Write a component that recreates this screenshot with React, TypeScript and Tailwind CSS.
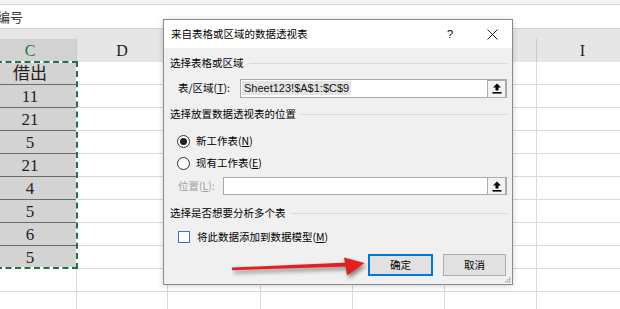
import React from 'react';

const cjk = { fontFamily: '"Noto Sans CJK SC", "Liberation Sans", sans-serif' };
const serif = { fontFamily: '"Liberation Serif", "Noto Sans CJK SC", serif' };

const columns = [
  { label: 'C', width: 'w-[93px]' },
  { label: 'D', width: 'w-[91px]' },
  { label: 'E', width: 'w-[93px]' },
  { label: 'F', width: 'w-[92px]' },
  { label: 'G', width: 'w-[92px]' },
  { label: 'H', width: 'w-[92px]' },
  { label: 'I', width: 'w-[92px]' },
];

const values = ['借出', '11', '21', '5', '21', '4', '5', '6', '5', '', ''];

function UploadButton() {
  return (
    <div className="flex h-[18px] w-[19px] items-center justify-center border border-[#adadad] bg-[#f3f3f3]">
      <svg width="10" height="11" viewBox="0 0 10 11">
        <path d="M5 0.5 L9 4.5 L6.5 4.5 L6.5 7.5 L3.5 7.5 L3.5 4.5 L1 4.5 Z" fill="#000" />
        <rect x="0.5" y="9" width="9" height="1.6" fill="#000" />
      </svg>
    </div>
  );
}

function SectionLabel({ text }: { text: string }) {
  return (
    <div className="flex h-[18px] items-center gap-[5px] leading-none">
      <span>{text}</span>
      <div className="h-px flex-1 bg-[#d9d9d9]" />
    </div>
  );
}

function Radio({ checked, label, hotkey }: { checked?: boolean; label: string; hotkey: string }) {
  return (
    <div className="flex h-[18px] items-center pl-[7px] leading-none">
      <div className="flex h-[13px] w-[13px] items-center justify-center rounded-full border border-[#333] bg-white">
        {checked && <div className="h-[7px] w-[7px] rounded-full bg-[#222]" />}
      </div>
      <span className="ml-[6px]">
        {label}(<span className="underline">{hotkey}</span>)
      </span>
    </div>
  );
}

function PivotDialog() {
  return (
    <div
      className="absolute left-[163px] top-[19px] flex h-[266px] w-[350px] flex-col border border-[#8a8a8a] bg-[#f0f0f0] text-[10.5px] text-black shadow-[0_1px_6px_rgba(0,0,0,0.18)]"
      style={cjk}
    >
      <div className="flex h-[28px] items-center bg-white pl-[7px] leading-none">
        <span className="flex-1">来自表格或区域的数据透视表</span>
        <span className="mr-[34px] text-[11px]" style={{ fontFamily: '"Liberation Sans", sans-serif' }}>
          ?
        </span>
        <svg width="11" height="11" viewBox="0 0 11 11" className="mr-[14px]">
          <path d="M0.5 0.5 L10.5 10.5 M10.5 0.5 L0.5 10.5" stroke="#222" strokeWidth="1" />
        </svg>
      </div>

      <div className="flex flex-1 flex-col pl-[6px] pr-[4px] pt-[6px]">
        <SectionLabel text="选择表格或区域" />

        <div className="mt-[7px] flex h-[19px] items-center pl-[8px] pr-[1px] leading-none">
          <span className="w-[62px]">
            表/区域(<span className="underline">T</span>):
          </span>
          <div className="flex h-[19px] flex-1 items-center border border-[#a8a8a8] bg-white pl-[1px]">
            <span
              className="flex-1 leading-[15px]"
              style={{ fontFamily: '"Liberation Sans", sans-serif', fontSize: '11px' }}
            >
              <span className="bg-[#e4e4e4] px-[2px] py-[1px] text-[#111]">Sheet123!$A$1:$C$9</span>
            </span>
            <UploadButton />
          </div>
        </div>

        <div className="mt-[7px]">
          <SectionLabel text="选择放置数据透视表的位置" />
        </div>

        <div className="mt-[9px]">
          <Radio checked label="新工作表" hotkey="N" />
        </div>
        <div className="mt-[4px]">
          <Radio label="现有工作表" hotkey="E" />
        </div>

        <div className="mt-[5px] flex h-[18px] items-center pl-[8px] pr-[1px] leading-none">
          <span className="w-[45px] text-[#a0a0a0]">
            位置(<span className="underline">L</span>):
          </span>
          <div className="flex h-[18px] flex-1 items-center justify-end border border-[#a8a8a8] bg-white">
            <UploadButton />
          </div>
        </div>

        <div className="mt-[9px]">
          <SectionLabel text="选择是否想要分析多个表" />
        </div>

        <div className="mt-[6px] flex h-[18px] items-center pl-[8px] leading-none">
          <div className="h-[12px] w-[12px] border border-[#3a74c4] bg-white" />
          <span className="ml-[7px]">
            将此数据添加到数据模型(<span className="underline">M</span>)
          </span>
        </div>

        <div className="mt-[8px] flex justify-end gap-[10px] pr-[2px] leading-none">
          <div className="flex h-[22px] w-[65px] items-center justify-center border-2 border-[#0078d7] bg-[#e1e1e1]">
            确定
          </div>
          <div className="flex h-[22px] w-[63px] items-center justify-center border border-[#adadad] bg-[#e1e1e1]">
            取消
          </div>
        </div>
      </div>

      <svg width="6" height="6" viewBox="0 0 6 6" className="absolute bottom-[1px] right-[1px]">
        <rect x="4" y="0" width="1.5" height="1.5" fill="#b0b0b0" />
        <rect x="2" y="2" width="1.5" height="1.5" fill="#b0b0b0" />
        <rect x="4" y="2" width="1.5" height="1.5" fill="#b0b0b0" />
        <rect x="0" y="4" width="1.5" height="1.5" fill="#b0b0b0" />
        <rect x="2" y="4" width="1.5" height="1.5" fill="#b0b0b0" />
        <rect x="4" y="4" width="1.5" height="1.5" fill="#b0b0b0" />
      </svg>
    </div>
  );
}

function RedArrow() {
  return (
    <svg
      width="620"
      height="309"
      viewBox="0 0 620 309"
      className="pointer-events-none absolute left-0 top-0 drop-shadow-[2px_3px_2px_rgba(0,0,0,0.45)]"
    >
      <path d="M232 267.6 L232 270.2 L348 266.6 L348 262.4 Z" fill="#e3201f" />
      <path d="M344 257.5 L364.5 263 L347 275.5 Z" fill="#e3201f" />
    </svg>
  );
}

export default function App() {
  return (
    <div className="relative h-[309px] w-[620px] overflow-hidden bg-white" style={cjk}>
      <div className="h-[5px] border-b border-[#d6d6d6] bg-[#f3f3f3]" />
      <div className="flex h-[24px] items-center border-b border-[#d4d4d4] bg-white">
        <span className="-ml-[3px] text-[13px] leading-none text-[#333]">编号</span>
      </div>

      <div className="-ml-[16px]">
        <div className="h-[10px] bg-[#e6e6e6]" />
        <div className="flex h-[23px]">
          {columns.map((c, i) => (
            <div
              key={c.label}
              className={`${c.width} flex shrink-0 items-center justify-center border-r border-[#c9c9c9] text-[16px] leading-none ${
                i === 0 ? 'bg-[#d2d2d2] text-[#217346]' : 'bg-[#e6e6e6] text-[#222]'
              }`}
              style={serif}
            >
              {c.label}
            </div>
          ))}
        </div>

        {values.map((v, r) => (
          <div key={r} className="flex h-[23px]">
            {columns.map((c, i) => {
              const selected = i === 0 && r < 9;
              return (
                <div
                  key={c.label}
                  className={`${c.width} flex shrink-0 items-center justify-center border-r border-b text-[17px] leading-none text-[#222] ${
                    selected ? 'border-[#6a6a6a] bg-[#d3d3d3]' : 'border-[#dadada] bg-white'
                  }`}
                  style={serif}
                >
                  {i === 0 ? v : ''}
                </div>
              );
            })}
          </div>
        ))}
      </div>

      {/* copy marquee around C2:C10 */}
      <div className="pointer-events-none absolute left-[-4px] top-[61px] h-[208px] w-[82px] border-2 border-white">
        <div className="absolute -inset-[2px] border-2 border-dashed border-[#217346]" />
      </div>

      <PivotDialog />
      <RedArrow />
    </div>
  );
}
